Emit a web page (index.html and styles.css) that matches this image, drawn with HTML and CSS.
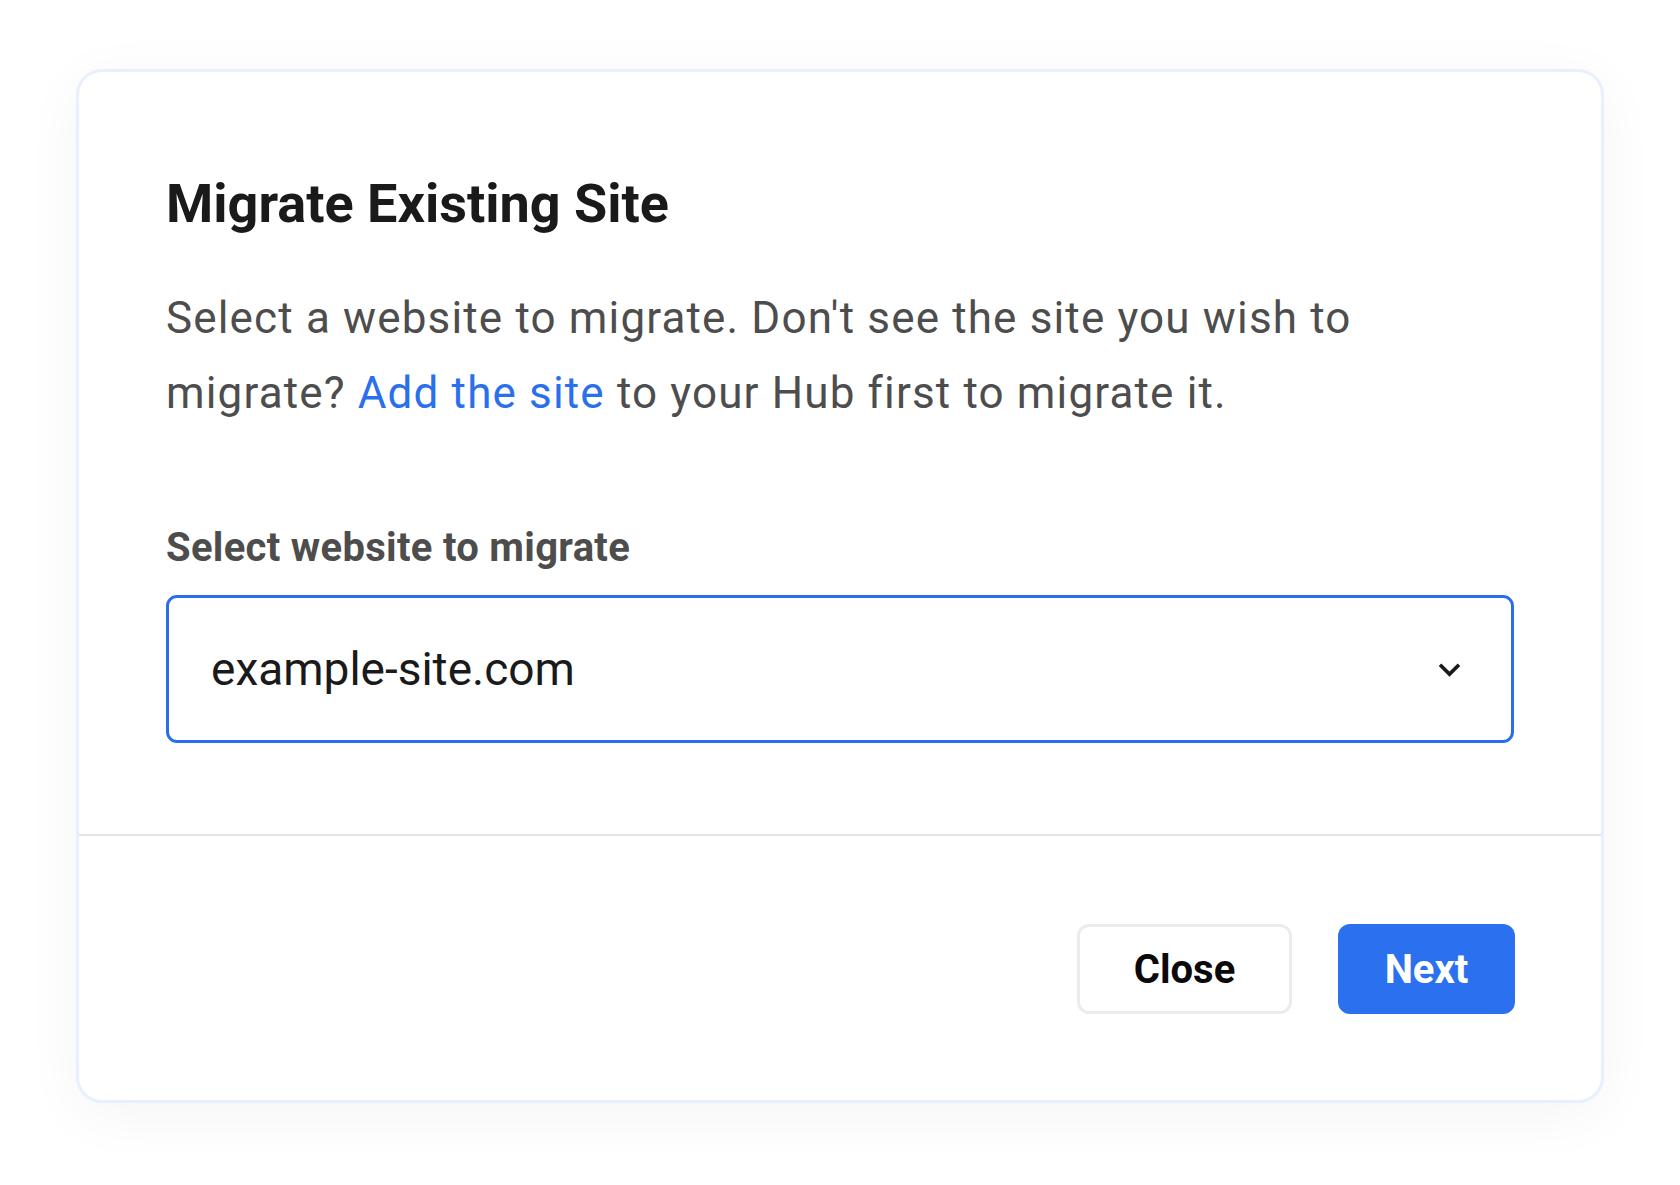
FILE: index.html
```html
<!DOCTYPE html>
<html lang="en">
<head>
  <meta charset="UTF-8">
  <meta name="viewport" content="width=device-width, initial-scale=1.0">
  <title>Migrate Existing Site</title>
  <link rel="stylesheet" href="styles.css">
</head>
<body>
  <div class="modal">
    <div class="modal-body">
      <h1 class="modal-title">Migrate Existing Site</h1>
      <p class="modal-text">
        Select a website to migrate. Don't see the site you wish to migrate?
        <a href="#">Add the site</a> to your Hub first to migrate it.
      </p>

      <label class="field-label" for="site-select">Select website to migrate</label>
      <div class="select-box" id="site-select">
        <span class="select-value">example-site.com</span>
        <svg class="select-arrow" viewBox="0 0 24 24" width="43" height="43" aria-hidden="true">
          <path d="M16.59 8.59L12 13.17 7.41 8.59 6 10l6 6 6-6z" fill="#1a1a1a"/>
        </svg>
      </div>
    </div>

    <div class="modal-footer">
      <button class="btn btn-close">Close</button>
      <button class="btn btn-next">Next</button>
    </div>
  </div>
</body>
</html>
```

FILE: styles.css
```css
body {
  font-family: Roboto, "Liberation Sans", Arial, sans-serif;
  margin: 0;
  padding: 69px 76px 82px;
  background-color: #ffffff;
}

.modal {
  background-color: #ffffff;
  border: 3px solid #e9f0fd;
  border-radius: 26px;
  box-shadow: 0 12px 60px rgba(0, 0, 0, 0.045);
}

.modal-body {
  padding: 100px 87px 91px;
}

.modal-title {
  margin: 0;
  font-size: 54px;
  line-height: 64px;
  font-weight: 700;
  color: #1a1a1a;
}

.modal-text {
  margin: 45px 0 0;
  font-size: 44px;
  line-height: 75px;
  letter-spacing: 1.15px;
  color: #4d4d4d;
}

.modal-text a {
  color: #2a6fec;
  text-decoration: none;
}

.field-label {
  display: block;
  margin-top: 93px;
  font-size: 40px;
  line-height: 48px;
  font-weight: 700;
  letter-spacing: 0.3px;
  color: #4d4d4d;
}

.select-box {
  box-sizing: border-box;
  margin-top: 23px;
  height: 148px;
  border: 3px solid #2a6ded;
  border-radius: 11px;
  padding: 0 40px 0 42px;
  display: flex;
  align-items: center;
  justify-content: space-between;
}

.select-value {
  font-size: 46px;
  line-height: 52px;
  color: #1a1a1a;
}

.select-arrow {
  display: block;
}

.modal-footer {
  border-top: 2px solid #e4e4e4;
  padding: 88px 86px 86px;
  display: flex;
  justify-content: flex-end;
  gap: 46px;
}

.btn {
  height: 90px;
  font-family: inherit;
  font-size: 40px;
  font-weight: 700;
  border-radius: 12px;
  cursor: pointer;
}

.btn-close {
  width: 215px;
  background-color: #ffffff;
  border: 3px solid #ececec;
  color: #0a0a0a;
}

.btn-next {
  width: 177px;
  background-color: #2b70ee;
  border: none;
  color: #ffffff;
}
```
